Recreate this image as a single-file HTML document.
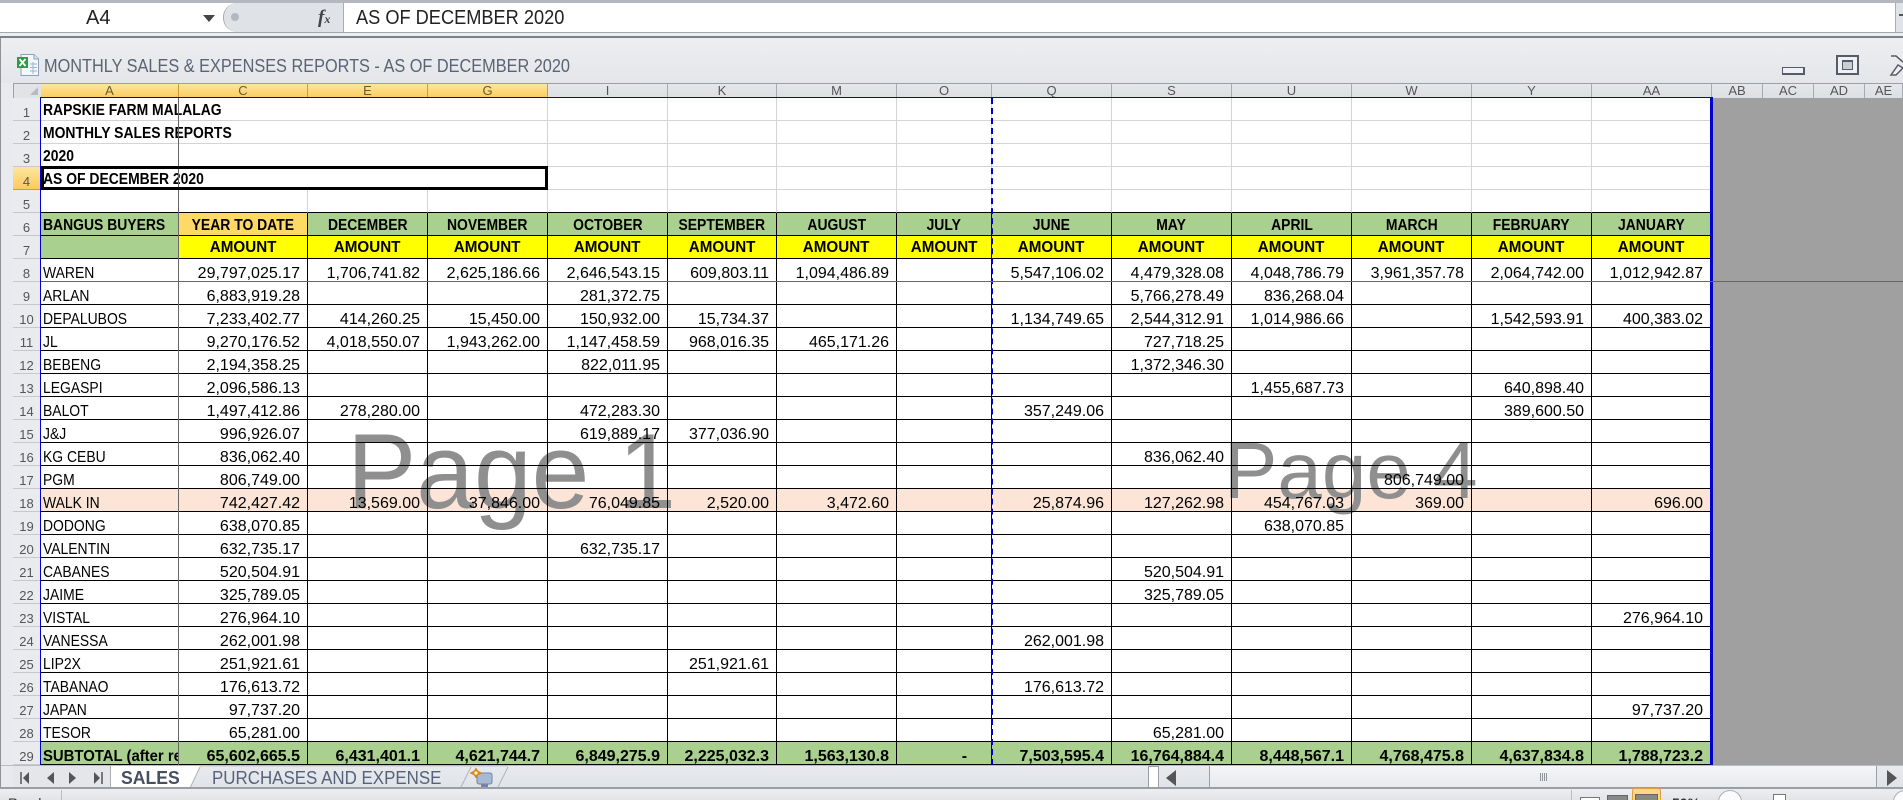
<!DOCTYPE html>
<html><head><meta charset="utf-8"><title>Monthly Sales</title>
<style>
*{box-sizing:border-box}
html{margin:0;padding:0;width:1903px;height:800px;overflow:hidden;background:#e8eaed}
body{margin:0;padding:0;width:1903px;height:800px;overflow:hidden;position:relative;background:#e8eaed;font-family:"Liberation Sans",sans-serif}
.a{position:absolute}
i{font-style:normal;display:inline-block;transform:scaleX(.87);transform-origin:0 50%}
#t{position:absolute;left:41px;top:98px;width:1670px;border-collapse:separate;border-spacing:0;table-layout:fixed;z-index:3;font-size:16px;color:#000}
#t td{height:23px;padding:7px 7px 0 0;line-height:15px;border-right:1px solid #000;border-bottom:1px solid #000;white-space:nowrap;text-align:right;vertical-align:top}
#t td.l{text-align:left;padding-left:2px;padding-right:0}
#t tr.g td{border-color:#d4d4d4;padding:4px 0 0 2px;line-height:18px;text-align:left;font-weight:bold;color:#000}
#t tr.h td{text-align:center;padding:4px 0 0;line-height:18px;font-weight:bold;background:#a9d08e;color:#000}
#t tr.h td i,#t tr.y td i{transform-origin:50% 50%}
#t tr.y td{text-align:center;padding:2px 0 0;line-height:20px;font-weight:bold;background:#ff0;color:#000}
#t tr.y td i{transform:scaleX(.95)}
#t tr.h td.l,#t tr.y td.l{text-align:left;padding-left:2px}
#t tr.h td.l i{transform-origin:0 50%}
#t tr.s td{font-weight:bold;background:#a9d08e;color:#000}
#t td.o{background:#ffd966!important}
.sub{display:block;overflow:hidden;width:135px}
.sub i{transform:scaleX(.93)}
.ch{position:absolute;top:84px;height:14px;font-size:13px;line-height:14px;text-align:center;color:#555;background:linear-gradient(#e5e7ea,#dcdfe3);border-right:1px solid #a8acb2}
.ch.on{background:linear-gradient(#fde6a0,#fbcb5c);border-right:1px solid #d29a3a;color:#6b5a30}
.rh{position:absolute;left:13px;width:27px;height:23px;padding-top:7px;font-size:13px;line-height:15px;text-align:center;color:#555;background:#e9ebee;border-bottom:1px solid #c5c9ce}
.rh.on{background:linear-gradient(#fde6a0,#fbcb5c);border-bottom:1px solid #d29a3a}
</style></head><body>

<!-- formula bar -->
<div class="a" style="left:0;top:0;width:1903px;height:3px;background:#b4b8be"></div>
<div class="a" style="left:0;top:3px;width:1903px;height:29px;background:#fff"></div>
<div class="a" style="left:0;top:32px;width:1903px;height:1px;background:#a2a7ad"></div>
<div class="a" style="left:0;top:33px;width:1903px;height:3px;background:#eceef0"></div>
<div class="a" style="left:0;top:36px;width:1903px;height:2px;background:#7d8187"></div>
<div class="a" style="left:86px;top:6px;font-size:20px;line-height:24px;color:#222">A4</div>
<svg class="a" style="left:203px;top:15px" width="12" height="7"><path d="M0 0H12L6 7Z" fill="#444"/></svg>
<div class="a" style="left:223px;top:3px;width:121px;height:29px;background:#dfe2e6;border-radius:14px 0 0 14px;border-left:1px solid #a8adb3;border-right:1px solid #a8adb3"></div>
<div class="a" style="left:231px;top:13px;width:8px;height:8px;border-radius:4px;background:#b4b8bd"></div>
<div class="a" style="left:318px;top:6px;font:italic bold 19px/24px 'Liberation Serif',serif;color:#444">f<span style="font-size:12px">x</span></div>
<div class="a" style="left:356px;top:6px;font-size:20px;line-height:24px;color:#222;white-space:nowrap;transform:scaleX(.91);transform-origin:0 50%">AS OF DECEMBER 2020</div>
<div class="a" style="left:1895px;top:3px;width:8px;height:29px;background:#e0e3e7;border-left:1px solid #a8adb3"></div>
<div class="a" style="left:1899px;top:14px;width:4px;height:2px;background:#555"></div>

<!-- title bar -->
<div class="a" style="left:0;top:38px;width:1903px;height:45px;background:linear-gradient(#eceef1,#e4e6e9)"></div>
<div class="a" style="left:0;top:38px;width:1px;height:750px;background:#8f9399"></div>
<svg class="a" style="left:16px;top:53px" width="24" height="24" viewBox="0 0 24 24">
<path d="M5 1.500H18L22.500 6V22.500H5Z" fill="#f4f7fb" stroke="#8aa0bd"/>
<path d="M18 1.500V6H22.500" fill="#dfe6ef" stroke="#8aa0bd"/>
<path d="M14 11h7M14 14.500h7M14 18h7M17 9V21" stroke="#9db4cf" fill="none"/>
<rect x="1" y="4" width="11" height="11" fill="#2f9b45"/>
<path d="M3.500 6L9.500 13M9.500 6L3.500 13" stroke="#fff" stroke-width="1.800"/>
</svg>
<div class="a" style="left:44px;top:54px;font-size:18px;line-height:24px;color:#5a6474;white-space:nowrap;transform:scaleX(.905);transform-origin:0 50%">MONTHLY SALES &amp; EXPENSES REPORTS - AS OF DECEMBER 2020</div>
<div class="a" style="left:1782px;top:67px;width:23px;height:8px;background:#eef0f3;border:1px solid #545c6b;border-right-width:2px;border-bottom-width:2px"></div>
<div class="a" style="left:1836px;top:55px;width:23px;height:20px;background:#eef0f3;border:2px solid #545c6b"></div>
<div class="a" style="left:1842px;top:60px;width:11px;height:10px;background:#c9ced6;border:1px solid #545c6b;border-top-width:2px"></div>
<svg class="a" style="left:1888px;top:53px" width="15" height="24"><path d="M3 3H8L15 9M15 15L8 22H3L10 12Z" fill="#eef0f3" stroke="#545c6b" stroke-width="1.500"/></svg>

<!-- column headers -->
<div class="a" style="left:13px;top:83px;width:1890px;height:1px;background:#9aa0a6"></div>
<div class="a" style="left:13px;top:83px;width:1px;height:682px;background:#9aa0a6"></div>
<div class="a" style="left:14px;top:84px;width:27px;height:14px;background:#e1e3e6"></div>
<svg class="a" style="left:30px;top:87px" width="9" height="9"><path d="M8 0V8H0Z" fill="#b8bcc2"/></svg>
<div class="ch on" style="left:41px;width:138px">A</div>
<div class="ch on" style="left:179px;width:129px">C</div>
<div class="ch on" style="left:308px;width:120px">E</div>
<div class="ch on" style="left:428px;width:120px">G</div>
<div class="ch" style="left:548px;width:120px">I</div>
<div class="ch" style="left:668px;width:109px">K</div>
<div class="ch" style="left:777px;width:120px">M</div>
<div class="ch" style="left:897px;width:95px">O</div>
<div class="ch" style="left:992px;width:120px">Q</div>
<div class="ch" style="left:1112px;width:120px">S</div>
<div class="ch" style="left:1232px;width:120px">U</div>
<div class="ch" style="left:1352px;width:120px">W</div>
<div class="ch" style="left:1472px;width:120px">Y</div>
<div class="ch" style="left:1592px;width:120px">AA</div>
<div class="ch" style="left:1712px;width:51px">AB</div>
<div class="ch" style="left:1763px;width:51px">AC</div>
<div class="ch" style="left:1814px;width:51px">AD</div>
<div class="ch" style="left:1865px;width:38px">AE</div>

<!-- row headers -->
<div class="rh" style="top:98px">1</div><div class="rh" style="top:121px">2</div><div class="rh" style="top:144px">3</div>
<div class="rh on" style="top:167px">4</div><div class="rh" style="top:190px">5</div><div class="rh" style="top:213px">6</div>
<div class="rh" style="top:236px">7</div><div class="rh" style="top:259px">8</div><div class="rh" style="top:282px">9</div>
<div class="rh" style="top:305px">10</div><div class="rh" style="top:328px">11</div><div class="rh" style="top:351px">12</div>
<div class="rh" style="top:374px">13</div><div class="rh" style="top:397px">14</div><div class="rh" style="top:420px">15</div>
<div class="rh" style="top:443px">16</div><div class="rh" style="top:466px">17</div><div class="rh" style="top:489px">18</div>
<div class="rh" style="top:512px">19</div><div class="rh" style="top:535px">20</div><div class="rh" style="top:558px">21</div>
<div class="rh" style="top:581px">22</div><div class="rh" style="top:604px">23</div><div class="rh" style="top:627px">24</div>
<div class="rh" style="top:650px">25</div><div class="rh" style="top:673px">26</div><div class="rh" style="top:696px">27</div>
<div class="rh" style="top:719px">28</div><div class="rh" style="top:742px">29</div>

<!-- sheet backing -->
<div class="a" style="left:41px;top:98px;width:1670px;height:667px;background:#fff"></div>
<div class="a" style="left:41px;top:489px;width:1670px;height:22px;background:#fce4d6"></div>
<div class="a" style="left:1712px;top:98px;width:191px;height:668px;background:#a0a0a0"></div>
<div class="a" style="left:347px;top:411px;font-size:107px;line-height:120px;color:#8f8f8f;white-space:nowrap;z-index:1;transform:scaleX(.97);transform-origin:0 50%">Page 1</div>
<div class="a" style="left:1224px;top:426px;font-size:80px;line-height:90px;color:#8f8f8f;white-space:nowrap;z-index:1">Page 4</div>

<table id="t">
<colgroup><col style="width:138px"><col style="width:129px"><col style="width:120px"><col style="width:120px"><col style="width:120px"><col style="width:109px"><col style="width:120px"><col style="width:95px"><col style="width:120px"><col style="width:120px"><col style="width:120px"><col style="width:120px"><col style="width:120px"><col style="width:119px"></colgroup>
<tr class="g"><td colspan="4"><i>RAPSKIE FARM MALALAG</i></td><td></td><td></td><td></td><td></td><td></td><td></td><td></td><td></td><td></td><td></td></tr>
<tr class="g"><td colspan="4"><i>MONTHLY SALES REPORTS</i></td><td></td><td></td><td></td><td></td><td></td><td></td><td></td><td></td><td></td><td></td></tr>
<tr class="g"><td colspan="4"><i>2020</i></td><td></td><td></td><td></td><td></td><td></td><td></td><td></td><td></td><td></td><td></td></tr>
<tr class="g"><td colspan="4"><i>AS OF DECEMBER 2020</i></td><td></td><td></td><td></td><td></td><td></td><td></td><td></td><td></td><td></td><td></td></tr>
<tr class="g"><td style="border-bottom-color:#000"></td><td style="border-bottom-color:#000"></td><td style="border-bottom-color:#000"></td><td style="border-bottom-color:#000"></td><td style="border-bottom-color:#000"></td><td style="border-bottom-color:#000"></td><td style="border-bottom-color:#000"></td><td style="border-bottom-color:#000"></td><td style="border-bottom-color:#000"></td><td style="border-bottom-color:#000"></td><td style="border-bottom-color:#000"></td><td style="border-bottom-color:#000"></td><td style="border-bottom-color:#000"></td><td style="border-bottom-color:#000"></td></tr>
<tr class="h"><td class="l"><i>BANGUS BUYERS</i></td><td class="o"><i>YEAR TO DATE</i></td><td><i>DECEMBER</i></td><td><i>NOVEMBER</i></td><td><i>OCTOBER</i></td><td><i>SEPTEMBER</i></td><td><i>AUGUST</i></td><td><i>JULY</i></td><td><i>JUNE</i></td><td><i>MAY</i></td><td><i>APRIL</i></td><td><i>MARCH</i></td><td><i>FEBRUARY</i></td><td><i>JANUARY</i></td></tr>
<tr class="y"><td class="l" style="background:#a9d08e"></td><td><i>AMOUNT</i></td><td><i>AMOUNT</i></td><td><i>AMOUNT</i></td><td><i>AMOUNT</i></td><td><i>AMOUNT</i></td><td><i>AMOUNT</i></td><td><i>AMOUNT</i></td><td><i>AMOUNT</i></td><td><i>AMOUNT</i></td><td><i>AMOUNT</i></td><td><i>AMOUNT</i></td><td><i>AMOUNT</i></td><td><i>AMOUNT</i></td></tr>
<tr><td class="l"><i>WAREN</i></td><td>29,797,025.17</td><td>1,706,741.82</td><td>2,625,186.66</td><td>2,646,543.15</td><td>609,803.11</td><td>1,094,486.89</td><td></td><td>5,547,106.02</td><td>4,479,328.08</td><td>4,048,786.79</td><td>3,961,357.78</td><td>2,064,742.00</td><td>1,012,942.87</td></tr>
<tr><td class="l"><i>ARLAN</i></td><td>6,883,919.28</td><td></td><td></td><td>281,372.75</td><td></td><td></td><td></td><td></td><td>5,766,278.49</td><td>836,268.04</td><td></td><td></td><td></td></tr>
<tr><td class="l"><i>DEPALUBOS</i></td><td>7,233,402.77</td><td>414,260.25</td><td>15,450.00</td><td>150,932.00</td><td>15,734.37</td><td></td><td></td><td>1,134,749.65</td><td>2,544,312.91</td><td>1,014,986.66</td><td></td><td>1,542,593.91</td><td>400,383.02</td></tr>
<tr><td class="l"><i>JL</i></td><td>9,270,176.52</td><td>4,018,550.07</td><td>1,943,262.00</td><td>1,147,458.59</td><td>968,016.35</td><td>465,171.26</td><td></td><td></td><td>727,718.25</td><td></td><td></td><td></td><td></td></tr>
<tr><td class="l"><i>BEBENG</i></td><td>2,194,358.25</td><td></td><td></td><td>822,011.95</td><td></td><td></td><td></td><td></td><td>1,372,346.30</td><td></td><td></td><td></td><td></td></tr>
<tr><td class="l"><i>LEGASPI</i></td><td>2,096,586.13</td><td></td><td></td><td></td><td></td><td></td><td></td><td></td><td></td><td>1,455,687.73</td><td></td><td>640,898.40</td><td></td></tr>
<tr><td class="l"><i>BALOT</i></td><td>1,497,412.86</td><td>278,280.00</td><td></td><td>472,283.30</td><td></td><td></td><td></td><td>357,249.06</td><td></td><td></td><td></td><td>389,600.50</td><td></td></tr>
<tr><td class="l"><i>J&amp;J</i></td><td>996,926.07</td><td></td><td></td><td>619,889.17</td><td>377,036.90</td><td></td><td></td><td></td><td></td><td></td><td></td><td></td><td></td></tr>
<tr><td class="l"><i>KG CEBU</i></td><td>836,062.40</td><td></td><td></td><td></td><td></td><td></td><td></td><td></td><td>836,062.40</td><td></td><td></td><td></td><td></td></tr>
<tr><td class="l"><i>PGM</i></td><td>806,749.00</td><td></td><td></td><td></td><td></td><td></td><td></td><td></td><td></td><td></td><td>806,749.00</td><td></td><td></td></tr>
<tr><td class="l"><i>WALK IN</i></td><td>742,427.42</td><td>13,569.00</td><td>37,846.00</td><td>76,049.85</td><td>2,520.00</td><td>3,472.60</td><td></td><td>25,874.96</td><td>127,262.98</td><td>454,767.03</td><td>369.00</td><td></td><td>696.00</td></tr>
<tr><td class="l"><i>DODONG</i></td><td>638,070.85</td><td></td><td></td><td></td><td></td><td></td><td></td><td></td><td></td><td>638,070.85</td><td></td><td></td><td></td></tr>
<tr><td class="l"><i>VALENTIN</i></td><td>632,735.17</td><td></td><td></td><td>632,735.17</td><td></td><td></td><td></td><td></td><td></td><td></td><td></td><td></td><td></td></tr>
<tr><td class="l"><i>CABANES</i></td><td>520,504.91</td><td></td><td></td><td></td><td></td><td></td><td></td><td></td><td>520,504.91</td><td></td><td></td><td></td><td></td></tr>
<tr><td class="l"><i>JAIME</i></td><td>325,789.05</td><td></td><td></td><td></td><td></td><td></td><td></td><td></td><td>325,789.05</td><td></td><td></td><td></td><td></td></tr>
<tr><td class="l"><i>VISTAL</i></td><td>276,964.10</td><td></td><td></td><td></td><td></td><td></td><td></td><td></td><td></td><td></td><td></td><td></td><td>276,964.10</td></tr>
<tr><td class="l"><i>VANESSA</i></td><td>262,001.98</td><td></td><td></td><td></td><td></td><td></td><td></td><td>262,001.98</td><td></td><td></td><td></td><td></td><td></td></tr>
<tr><td class="l"><i>LIP2X</i></td><td>251,921.61</td><td></td><td></td><td></td><td>251,921.61</td><td></td><td></td><td></td><td></td><td></td><td></td><td></td><td></td></tr>
<tr><td class="l"><i>TABANAO</i></td><td>176,613.72</td><td></td><td></td><td></td><td></td><td></td><td></td><td>176,613.72</td><td></td><td></td><td></td><td></td><td></td></tr>
<tr><td class="l"><i>JAPAN</i></td><td>97,737.20</td><td></td><td></td><td></td><td></td><td></td><td></td><td></td><td></td><td></td><td></td><td></td><td>97,737.20</td></tr>
<tr><td class="l"><i>TESOR</i></td><td>65,281.00</td><td></td><td></td><td></td><td></td><td></td><td></td><td></td><td>65,281.00</td><td></td><td></td><td></td><td></td></tr>
<tr class="s"><td class="l"><span class="sub"><i>SUBTOTAL (after remittance)</i></span></td><td>65,602,665.5</td><td>6,431,401.1</td><td>4,621,744.7</td><td>6,849,275.9</td><td>2,225,032.3</td><td>1,563,130.8</td><td style="padding-right:24px">-</td><td>7,503,595.4</td><td>16,764,884.4</td><td>8,448,567.1</td><td>4,768,475.8</td><td>4,637,834.8</td><td>1,788,723.2</td></tr>
</table>

<!-- overlays -->
<div class="a" style="left:40px;top:97px;width:1672px;height:1px;background:#0000d0;z-index:4"></div>
<div class="a" style="left:40px;top:97px;width:1px;height:668px;background:#0000d0;z-index:4"></div>
<div class="a" style="left:1710px;top:97px;width:3px;height:668px;background:#0000d0;z-index:4"></div>
<div class="a" style="left:991px;top:98px;width:0;height:667px;border-left:2px dashed #0000d0;z-index:4"></div>
<div class="a" style="left:178px;top:98px;width:1px;height:667px;background:#666;z-index:4"></div>
<div class="a" style="left:41px;top:281px;width:1862px;height:1px;background:#666;z-index:4"></div>
<div class="a" style="left:41px;top:166px;width:507px;height:24px;border:3px solid #000;z-index:5"></div>

<!-- tab bar -->
<div class="a" style="left:1px;top:765px;width:1902px;height:1px;background:#b9bdc3;z-index:6"></div>
<div class="a" style="left:13px;top:766px;width:1890px;height:22px;background:linear-gradient(#e8eaee,#e0e3e7);z-index:6"></div>
<div class="a" style="left:13px;top:766px;width:98px;height:22px;background:#e4e6ea;border-right:1px solid #a8adb3;z-index:6"></div>
<svg class="a" style="left:20px;top:770px;z-index:7" width="90" height="16"><path d="M1 2V14" stroke="#555" stroke-width="1.500"/><path d="M9 2L3 8L9 14Z" fill="#555"/><path d="M34 2L27 8L34 14Z" fill="#555"/><path d="M49 2L56 8L49 14Z" fill="#555"/><path d="M74 2L80 8L74 14Z" fill="#555"/><path d="M82 2V14" stroke="#555" stroke-width="1.500"/></svg>
<svg class="a" style="left:111px;top:766px;z-index:7" width="400" height="22">
<path d="M0 0H89L79 22H0Z" fill="#fff"/>
<path d="M89 1L79 22" stroke="#b0b5bb" fill="none"/>
<path d="M360 1L350 21M397 1L387 21" stroke="#b0b5bb" fill="none"/>
<path d="M89 0H397" stroke="#c5c9ce" fill="none"/>
<rect x="366" y="7" width="15" height="11" rx="2" fill="#a7b9d3" stroke="#6f86a8"/>
<rect x="370" y="18" width="7" height="3" fill="#6f86a8"/>
<path d="M365 2L367 5L371 7L367 9L365 12L363 9L359 7L363 5Z" fill="#e08a20" stroke="#c9771a" stroke-width=".5"/>
<circle cx="365" cy="7" r="1.600" fill="#fff3c8"/>
</svg>
<div class="a" style="left:121px;top:767px;font-size:18px;font-weight:bold;line-height:22px;color:#46505f;z-index:8;white-space:nowrap;transform:scaleX(.98);transform-origin:0 50%">SALES</div>
<div class="a" style="left:212px;top:767px;font-size:18px;line-height:22px;color:#56637a;z-index:8;white-space:nowrap;transform:scaleX(.94);transform-origin:0 50%">PURCHASES AND EXPENSE</div>

<!-- scrollbar -->
<div class="a" style="left:1148px;top:766px;width:11px;height:21px;background:#fff;border:1px solid #9aa0a6;border-bottom:0;z-index:7"></div>
<svg class="a" style="left:1165px;top:770px;z-index:7" width="12" height="17"><path d="M11 0V16L1 8Z" fill="#555"/></svg>
<div class="a" style="left:1209px;top:766px;width:668px;height:21px;background:linear-gradient(#f4f5f7,#e8eaee);border-left:1px solid #9aa0a6;border-right:1px solid #9aa0a6;z-index:7"></div>
<div class="a" style="left:1540px;top:788px;margin-top:-15px;width:7px;height:8px;background:repeating-linear-gradient(90deg,#8f949b 0 1px,transparent 1px 2px);z-index:8"></div>
<svg class="a" style="left:1886px;top:770px;z-index:7" width="12" height="17"><path d="M1 0V16L11 8Z" fill="#555"/></svg>

<!-- status bar -->
<div class="a" style="left:0;top:787px;width:1903px;height:2px;background:#9a9fa6;z-index:9"></div>
<div class="a" style="left:0;top:789px;width:1903px;height:11px;background:linear-gradient(#eceef1,#e2e4e8);z-index:9"></div>
<div class="a" style="left:8px;top:795px;font-size:14px;line-height:16px;color:#333;z-index:10">Ready</div>
<div class="a" style="left:61px;top:790px;width:1px;height:10px;background:#b9bdc3;z-index:10"></div>
<div class="a" style="left:1571px;top:790px;width:1px;height:10px;background:#b9bdc3;z-index:10"></div>
<div class="a" style="left:1580px;top:797px;width:20px;height:3px;background:#fff;border:1px solid #777;border-bottom:0;z-index:10"></div>
<div class="a" style="left:1607px;top:795px;width:21px;height:5px;background:#888;border:1px solid #666;border-bottom:0;z-index:10"></div>
<div class="a" style="left:1632px;top:788px;width:29px;height:12px;background:#fbd68a;border:1px solid #dba23c;border-bottom:0;border-radius:3px 3px 0 0;z-index:10"></div>
<div class="a" style="left:1635px;top:794px;width:23px;height:6px;background:#888;border:1px solid #666;border-bottom:0;z-index:10"></div>
<div class="a" style="left:1672px;top:795px;font-size:14px;font-weight:bold;line-height:16px;color:#333;z-index:10">50%</div>
<div class="a" style="left:1718px;top:790px;width:24px;height:24px;border-radius:12px;background:#fafbfc;border:1px solid #aab0b7;z-index:10"></div>
<div class="a" style="left:1773px;top:794px;width:13px;height:6px;background:#fff;border:1px solid #777;border-bottom:0;z-index:10"></div>
<div class="a" style="left:1893px;top:790px;width:24px;height:24px;border-radius:12px;background:#fafbfc;border:1px solid #aab0b7;z-index:10"></div>
</body></html>
